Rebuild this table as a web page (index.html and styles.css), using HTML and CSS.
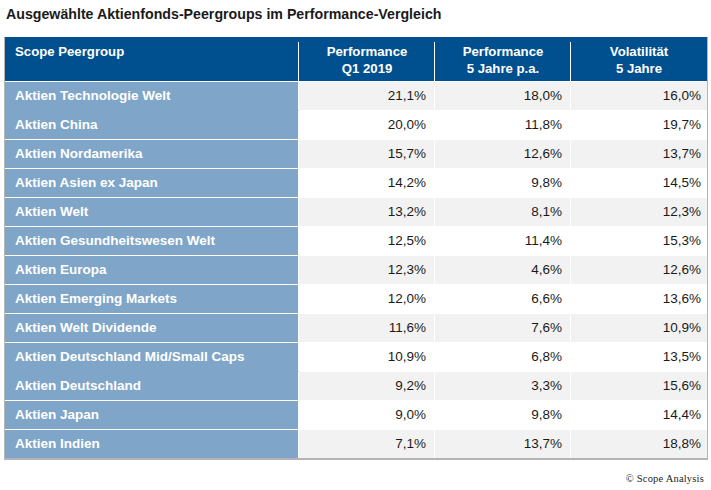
FILE: index.html
```html
<!DOCTYPE html>
<html lang="de">
<head>
<meta charset="utf-8">
<title>Aktienfonds-Peergroups</title>
<link rel="stylesheet" href="styles.css">
</head>
<body>
<div class="page">
  <h1 class="title">Ausgewählte Aktienfonds-Peergroups im Performance-Vergleich</h1>
  <table class="peer">
    <thead>
      <tr>
        <th class="name">Scope Peergroup</th>
        <th>Performance<br>Q1 2019</th>
        <th>Performance<br>5 Jahre p.a.</th>
        <th class="last">Volatilität<br>5 Jahre</th>
      </tr>
    </thead>
    <tbody>
      <tr class="alt"><td class="name">Aktien Technologie Welt</td><td>21,1%</td><td>18,0%</td><td>16,0%</td></tr>
      <tr class="nl"><td class="name">Aktien China</td><td>20,0%</td><td>11,8%</td><td>19,7%</td></tr>
      <tr class="alt"><td class="name">Aktien Nordamerika</td><td>15,7%</td><td>12,6%</td><td>13,7%</td></tr>
      <tr><td class="name">Aktien Asien ex Japan</td><td>14,2%</td><td>9,8%</td><td>14,5%</td></tr>
      <tr class="alt"><td class="name">Aktien Welt</td><td>13,2%</td><td>8,1%</td><td>12,3%</td></tr>
      <tr><td class="name">Aktien Gesundheitswesen Welt</td><td>12,5%</td><td>11,4%</td><td>15,3%</td></tr>
      <tr class="alt"><td class="name">Aktien Europa</td><td>12,3%</td><td>4,6%</td><td>12,6%</td></tr>
      <tr><td class="name">Aktien Emerging Markets</td><td>12,0%</td><td>6,6%</td><td>13,6%</td></tr>
      <tr class="alt"><td class="name">Aktien Welt Dividende</td><td>11,6%</td><td>7,6%</td><td>10,9%</td></tr>
      <tr><td class="name">Aktien Deutschland Mid/Small Caps</td><td>10,9%</td><td>6,8%</td><td>13,5%</td></tr>
      <tr class="alt nl"><td class="name">Aktien Deutschland</td><td>9,2%</td><td>3,3%</td><td>15,6%</td></tr>
      <tr><td class="name">Aktien Japan</td><td>9,0%</td><td>9,8%</td><td>14,4%</td></tr>
      <tr class="alt"><td class="name">Aktien Indien</td><td>7,1%</td><td>13,7%</td><td>18,8%</td></tr>
    </tbody>
  </table>
  <div class="source">© Scope Analysis</div>
</div>
</body>
</html>
```
FILE: styles.css
```css
html, body {
  margin: 0;
  padding: 0;
  background: #ffffff;
}

.page {
  width: 711px;
  height: 490px;
  padding: 0 3px 0 4px;
  box-sizing: border-box;
  font-family: "Liberation Sans", Arial, sans-serif;
  color: #1a1a1a;
}

.title {
  margin: 0;
  padding: 6px 0 0 2px;
  height: 37px;
  box-sizing: border-box;
  font-size: 14.2px;
  line-height: 16px;
  font-weight: bold;
  color: #1a1a1a;
}

.peer {
  width: 704px;
  border-collapse: separate;
  border-spacing: 0;
  border-left: 1px solid #b4b4b4;
  border-right: 1px solid #b4b4b4;
  border-bottom: 2px solid #b4b4b4;
  table-layout: fixed;
  font-size: 13.5px;
}

.peer th {
  height: 44px;
  box-sizing: border-box;
  padding: 6px 0 4px;
  vertical-align: top;
  text-align: center;
  font-size: 13.2px;
  line-height: 17px;
  font-weight: bold;
  color: #ffffff;
  background: linear-gradient(#ffffff, #ffffff) right 5px / 1px calc(100% - 5px) no-repeat, #004f8f;
  width: 136px;
}

.peer th.name {
  width: 294px;
  text-align: left;
  padding-left: 10px;
}

.peer th.last {
  background: #004f8f;
}

.peer td {
  height: 29px;
  box-sizing: border-box;
  padding: 0 8px 0 0;
  border-top: 1px solid #ffffff;
  border-right: 1px solid #ffffff;
  text-align: right;
  line-height: 16px;
  vertical-align: middle;
  color: #1a1a1a;
  background: #ffffff;
}

.peer td:last-child {
  border-right: none;
  padding-right: 6px;
}

.peer tr.alt td {
  background: #f2f2f2;
}

.peer td.name,
.peer tr.alt td.name {
  text-align: left;
  padding: 0 0 0 10px;
  font-weight: bold;
  color: #ffffff;
  background: #7fa6c8;
}

.peer tr.nl td.name {
  border-top-color: #7fa6c8;
}

.source {
  margin-top: 13px;
  padding-right: 4px;
  text-align: right;
  font-family: "Liberation Serif", "Times New Roman", serif;
  font-size: 10.5px;
  letter-spacing: 0.2px;
  color: #222222;
}
```
